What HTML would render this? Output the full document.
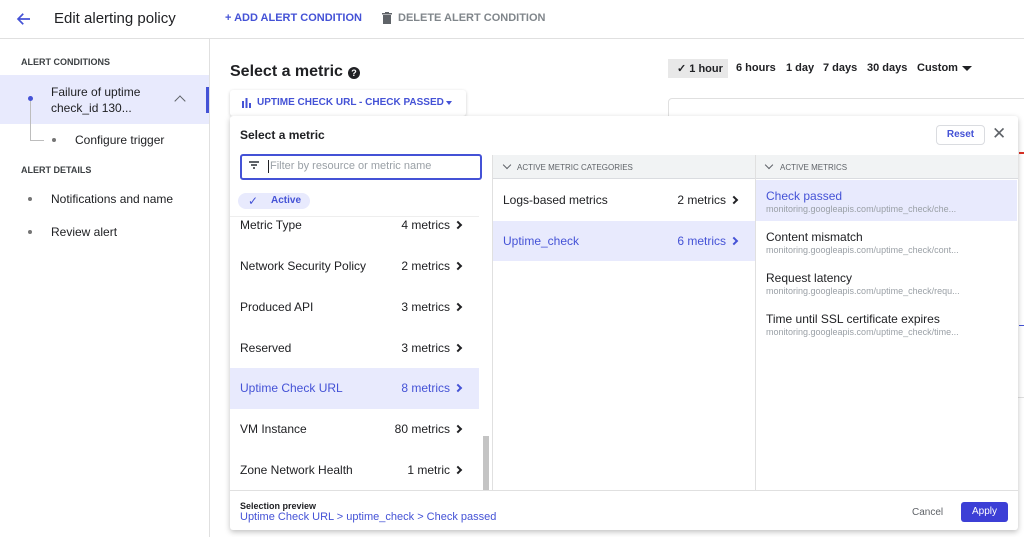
<!DOCTYPE html>
<html><head><meta charset="utf-8"><style>
*{box-sizing:border-box;margin:0;padding:0}
body{width:1024px;height:537px;overflow:hidden;background:#fff;font-family:"Liberation Sans",sans-serif;color:#202124;position:relative}
.a{position:absolute;white-space:nowrap}
.blue{color:#4452d6}
.row{position:absolute;left:230px;width:249px;height:41px;font-size:12px;line-height:41px;padding-left:10px}
.row .r{position:absolute;right:18px;top:0}
.chev{display:inline-block;width:6px;height:6px;border-right:2px solid currentColor;border-top:2px solid currentColor;transform:rotate(45deg);margin-left:5px;vertical-align:1px}
.m{position:absolute;left:756px;width:261px;height:41px;padding-left:10px;padding-top:9px;font-size:12px}
.m small{display:block;font-size:9px;color:#9aa0a6;margin-top:1px}
</style></head><body>
<div class="a" style="left:0;top:38px;width:1024px;height:1px;background:#e0e0e0"></div>
<svg class="a" style="left:15px;top:10px" width="18" height="18" viewBox="0 0 24 24"><path d="M20 12H5M11 5l-7 7 7 7" stroke="#4452d6" stroke-width="2.2" fill="none"/></svg>
<div class="a" style="left:54px;top:10px;font-size:15px">Edit alerting policy</div>
<div class="a blue" style="left:225px;top:12px;font-size:11px;font-weight:bold">+ ADD ALERT CONDITION</div>
<svg class="a" style="left:382px;top:12px" width="10" height="12" viewBox="0 0 10 12"><rect x="1" y="3" width="8" height="9" fill="#5f6368"/><rect x="0" y="1" width="10" height="1.5" fill="#5f6368"/><rect x="3" y="0" width="4" height="1.5" fill="#5f6368"/></svg>
<div class="a" style="left:398px;top:12px;font-size:11px;font-weight:bold;color:#80868b">DELETE ALERT CONDITION</div>
<div class="a" style="left:209px;top:39px;width:1px;height:498px;background:#e0e0e0"></div>
<div class="a" style="left:21px;top:57px;font-size:9px;font-weight:bold;color:#3c4043">ALERT CONDITIONS</div>
<div class="a" style="left:0;top:75px;width:209px;height:49px;background:#e8eafd"></div>
<div class="a" style="left:206px;top:87px;width:3px;height:26px;background:#4452d6"></div>
<div class="a" style="left:28px;top:96px;width:5px;height:5px;border-radius:50%;background:#4452d6"></div>
<div class="a" style="left:30px;top:101px;width:1px;height:40px;background:#bdbdbd"></div>
<div class="a" style="left:30px;top:140px;width:14px;height:1px;background:#bdbdbd"></div>
<div class="a" style="left:51px;top:84px;font-size:12px;line-height:16px">Failure of uptime<br>check_id 130...</div>
<div class="a" style="left:176px;top:97px;width:8px;height:8px;border-left:1.5px solid #5f6368;border-top:1.5px solid #5f6368;transform:rotate(45deg)"></div>
<div class="a" style="left:52px;top:138px;width:4px;height:4px;border-radius:50%;background:#757575"></div>
<div class="a" style="left:75px;top:133px;font-size:12px">Configure trigger</div>
<div class="a" style="left:21px;top:165px;font-size:9px;font-weight:bold;color:#3c4043">ALERT DETAILS</div>
<div class="a" style="left:28px;top:197px;width:4px;height:4px;border-radius:50%;background:#757575"></div>
<div class="a" style="left:51px;top:192px;font-size:12px">Notifications and name</div>
<div class="a" style="left:28px;top:230px;width:4px;height:4px;border-radius:50%;background:#757575"></div>
<div class="a" style="left:51px;top:225px;font-size:12px">Review alert</div>
<div class="a" style="left:230px;top:63px;font-size:16px;font-weight:bold;color:#202124">Select a metric</div>
<div class="a" style="left:348px;top:67px;width:12px;height:12px;border-radius:50%;background:#202124;color:#fff;font-size:9px;font-weight:bold;text-align:center;line-height:12px">?</div>
<div class="a" style="left:230px;top:90px;width:236px;height:26px;box-shadow:0 1px 3px rgba(0,0,0,.2);border-radius:3px"></div>
<svg class="a" style="left:242px;top:97px" width="10" height="11"><rect x="0" y="4" width="2" height="7" fill="#4452d6"/><rect x="3.5" y="1" width="2" height="10" fill="#4452d6"/><rect x="7" y="6" width="2" height="5" fill="#4452d6"/></svg>
<div class="a blue" style="left:257px;top:97px;font-size:10px;font-weight:bold">UPTIME CHECK URL - CHECK PASSED</div>
<div class="a" style="left:446px;top:101px;border:3.5px solid transparent;border-top:4px solid #4452d6"></div>
<div class="a" style="left:668px;top:59px;width:60px;height:19px;background:#e8e8e8"></div>
<div class="a" style="left:677px;top:62px;font-size:11px;font-weight:bold">✓ 1 hour</div>
<div class="a" style="left:736px;top:62px;font-size:11px;font-weight:bold">6 hours</div>
<div class="a" style="left:786px;top:62px;font-size:11px;font-weight:bold">1 day</div>
<div class="a" style="left:823px;top:62px;font-size:11px;font-weight:bold">7 days</div>
<div class="a" style="left:867px;top:62px;font-size:11px;font-weight:bold">30 days</div>
<div class="a" style="left:917px;top:62px;font-size:11px;font-weight:bold">Custom</div>
<div class="a" style="left:962px;top:66px;border:5px solid transparent;border-top:5px solid #202124"></div>
<div class="a" style="left:668px;top:98px;width:360px;height:300px;border:1px solid #e0e0e0;border-radius:4px"></div>
<div class="a" style="left:1019px;top:152px;width:5px;height:2px;background:#d93025"></div>
<div class="a" style="left:1019px;top:325px;width:5px;height:1px;background:#4452d6"></div>
<div class="a" style="left:230px;top:116px;width:788px;height:414px;background:#fff;box-shadow:0 2px 6px rgba(0,0,0,.25);border-radius:3px"></div>
<div class="a" style="left:240px;top:128px;font-size:12px;font-weight:bold">Select a metric</div>
<div class="a" style="left:936px;top:125px;width:49px;height:20px;border:1px solid #dadce0;border-radius:4px;font-size:10px;text-align:center;line-height:18px;font-weight:bold" ><span class="blue">Reset</span></div>
<div class="a" style="left:992px;top:124px;font-size:17px;color:#5f6368">✕</div>
<div class="a" style="left:240px;top:154px;width:242px;height:26px;border:2px solid #4452d6;border-radius:3px"></div>
<div class="a" style="left:249px;top:161px;width:10px;height:1.5px;background:#5f6368"></div>
<div class="a" style="left:251px;top:164px;width:6px;height:1.5px;background:#5f6368"></div>
<div class="a" style="left:253px;top:167px;width:2px;height:1.5px;background:#5f6368"></div>
<div class="a" style="left:268px;top:160px;width:1px;height:13px;background:#202124"></div>
<div class="a" style="left:270px;top:160px;font-size:11px;color:#9aa0a6">Filter by resource or metric name</div>
<div class="row" style="top:205px">Metric Type<span class="r">4 metrics<i class="chev"></i></span></div>
<div class="row" style="top:246px">Network Security Policy<span class="r">2 metrics<i class="chev"></i></span></div>
<div class="row" style="top:287px">Produced API<span class="r">3 metrics<i class="chev"></i></span></div>
<div class="row" style="top:328px">Reserved<span class="r">3 metrics<i class="chev"></i></span></div>
<div class="row blue" style="top:368px;background:#e8eafd">Uptime Check URL<span class="r">8 metrics<i class="chev"></i></span></div>
<div class="row" style="top:409px">VM Instance<span class="r">80 metrics<i class="chev"></i></span></div>
<div class="row" style="top:450px">Zone Network Health<span class="r">1 metric<i class="chev"></i></span></div>
<div class="a" style="left:230px;top:205px;width:249px;height:11px;background:#fff"></div>
<div class="a" style="left:238px;top:193px;width:72px;height:16px;border-radius:8px;background:#e8eafd"></div>
<div class="a" style="left:248px;top:194px;font-size:12px;color:#4452d6">✓</div>
<div class="a" style="left:271px;top:195px;font-size:10px;color:#4452d6;font-weight:bold">Active</div>
<div class="a" style="left:230px;top:216px;width:249px;height:1px;background:#eee"></div>
<div class="a" style="left:483px;top:436px;width:6px;height:54px;background:#c4c4c4"></div>
<div class="a" style="left:492px;top:155px;width:526px;height:335px;border-left:1px solid #e0e0e0"></div>
<div class="a" style="left:493px;top:155px;width:525px;height:24px;background:#f1f3f4;border-bottom:1px solid #dadce0"></div>
<div class="a" style="left:755px;top:155px;width:1px;height:335px;background:#e0e0e0"></div>
<div class="a" style="left:504px;top:162px;width:6px;height:6px;border-right:1.5px solid #5f6368;border-bottom:1.5px solid #5f6368;transform:rotate(45deg)"></div>
<div class="a" style="left:517px;top:163px;font-size:8px;color:#5f6368">ACTIVE METRIC CATEGORIES</div>
<div class="a" style="left:766px;top:162px;width:6px;height:6px;border-right:1.5px solid #5f6368;border-bottom:1.5px solid #5f6368;transform:rotate(45deg)"></div>
<div class="a" style="left:780px;top:163px;font-size:8px;color:#5f6368">ACTIVE METRICS</div>
<div class="a" style="left:493px;top:180px;width:262px;height:41px;font-size:12px;line-height:41px;padding-left:10px">Logs-based metrics<span style="position:absolute;right:18px">2 metrics<i class="chev"></i></span></div>
<div class="a blue" style="left:493px;top:221px;width:262px;height:40px;background:#e8eafd;font-size:12px;line-height:41px;padding-left:10px">Uptime_check<span style="position:absolute;right:18px">6 metrics<i class="chev"></i></span></div>
<div class="m" style="top:180px;background:#e8eafd"><span class="blue">Check passed</span><small>monitoring.googleapis.com/uptime_check/che...</small></div>
<div class="m" style="top:221px">Content mismatch<small>monitoring.googleapis.com/uptime_check/cont...</small></div>
<div class="m" style="top:262px">Request latency<small>monitoring.googleapis.com/uptime_check/requ...</small></div>
<div class="m" style="top:303px">Time until SSL certificate expires<small>monitoring.googleapis.com/uptime_check/time...</small></div>
<div class="a" style="left:230px;top:490px;width:788px;height:1px;background:#e0e0e0"></div>
<div class="a" style="left:240px;top:501px;font-size:9px;font-weight:bold">Selection preview</div>
<div class="a blue" style="left:240px;top:511px;font-size:11px">Uptime Check URL &gt; uptime_check &gt; Check passed</div>
<div class="a" style="left:912px;top:507px;font-size:10px;color:#5f6368">Cancel</div>
<div class="a" style="left:961px;top:502px;width:47px;height:20px;background:#3c3fd6;border-radius:3px;color:#fff;font-size:10px;text-align:center;line-height:20px">Apply</div>
</body></html>
